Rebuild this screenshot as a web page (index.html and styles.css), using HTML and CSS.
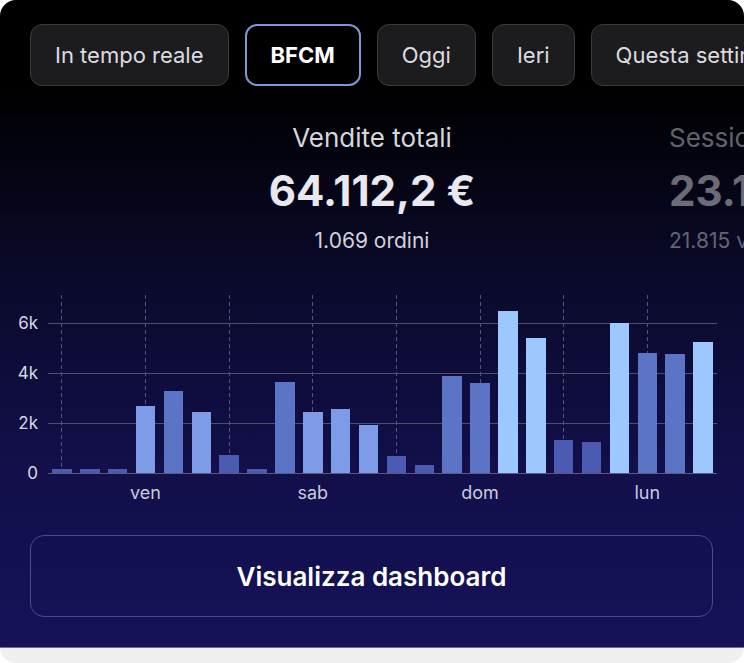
FILE: index.html
```html
<!DOCTYPE html>
<html lang="it">
<head>
    <meta charset="UTF-8">
    <meta name="viewport" content="width=device-width, initial-scale=1.0">
    <title>Statistiche</title>
    <link rel="stylesheet" href="styles.css">
</head>
<body>

    <div class="card">
        <div class="panel">

            <div class="tabs">
                <button class="tab">In tempo reale</button>
                <button class="tab active">BFCM</button>
                <button class="tab">Oggi</button>
                <button class="tab">Ieri</button>
                <button class="tab">Questa settimana</button>
            </div>

            <div class="stats">
                <div class="stat">
                    <div class="stat-title">Vendite totali</div>
                    <div class="stat-value">64.112,2 €</div>
                    <div class="stat-sub">1.069 ordini</div>
                </div>
                <div class="stat dim">
                    <div class="stat-title">Sessioni</div>
                    <div class="stat-value">23.108</div>
                    <div class="stat-sub">21.815 visitatori</div>
                </div>
            </div>

            <div class="chart">
                <div class="y-axis">
                    <span>6k</span>
                    <span>4k</span>
                    <span>2k</span>
                    <span>0</span>
                </div>
                <div class="plot-col">
                    <div class="plot">
                        <div class="slot mark"><div class="bar dark" style="height:4px"></div></div>
                        <div class="slot"><div class="bar dark" style="height:4px"></div></div>
                        <div class="slot"><div class="bar dark" style="height:4px"></div></div>
                        <div class="slot mark"><div class="bar light" style="height:67px"></div></div>
                        <div class="slot"><div class="bar mid" style="height:82px"></div></div>
                        <div class="slot"><div class="bar light" style="height:61px"></div></div>
                        <div class="slot mark"><div class="bar dark" style="height:18px"></div></div>
                        <div class="slot"><div class="bar dark" style="height:4px"></div></div>
                        <div class="slot"><div class="bar mid" style="height:91px"></div></div>
                        <div class="slot mark"><div class="bar light" style="height:61px"></div></div>
                        <div class="slot"><div class="bar light" style="height:64px"></div></div>
                        <div class="slot"><div class="bar light" style="height:48px"></div></div>
                        <div class="slot mark"><div class="bar dark" style="height:17px"></div></div>
                        <div class="slot"><div class="bar dark" style="height:8px"></div></div>
                        <div class="slot"><div class="bar mid" style="height:97px"></div></div>
                        <div class="slot mark"><div class="bar mid" style="height:90px"></div></div>
                        <div class="slot"><div class="bar peak" style="height:162px"></div></div>
                        <div class="slot"><div class="bar peak" style="height:135px"></div></div>
                        <div class="slot mark"><div class="bar dark" style="height:33px"></div></div>
                        <div class="slot"><div class="bar dark" style="height:31px"></div></div>
                        <div class="slot"><div class="bar peak" style="height:150px"></div></div>
                        <div class="slot mark"><div class="bar mid" style="height:120px"></div></div>
                        <div class="slot"><div class="bar mid" style="height:119px"></div></div>
                        <div class="slot"><div class="bar peak" style="height:131px"></div></div>
                    </div>
                    <div class="x-axis">
                        <span>ven</span>
                        <span>sab</span>
                        <span>dom</span>
                        <span>lun</span>
                    </div>
                </div>
            </div>

            <button class="dashboard-btn">Visualizza dashboard</button>
        </div>
    </div>

</body>
</html>
```

FILE: styles.css
```css
/* Pagina */
body {
    margin: 0;
    background: #fff;
    font-family: 'Inter', 'Noto Sans', sans-serif;
}

/* Scheda esterna con angoli arrotondati */
.card {
    height: 663px;
    border-radius: 16px;
    overflow: hidden;
    background: #efefef;
}

/* Pannello scuro con sfumatura verso il blu notte */
.panel {
    height: 648px;
    box-sizing: border-box;
    padding: 24px 31px 0 30px;
    overflow: hidden;
    background: linear-gradient(180deg, #000 14%, #0a0a2a 42%, #120f4a 72%, #15125a 100%);
    border-bottom: 1px solid #6c6aa6;
}

/* Filtri periodo */
.tabs {
    display: flex;
    gap: 16px;
}

.tab {
    flex-shrink: 0;
    height: 62px;
    padding: 0 24px;
    border: 1px solid #3a3a3c;
    border-radius: 12px;
    background: #1c1c1e;
    color: #dcdce0;
    font-family: inherit;
    font-size: 22px;
    white-space: nowrap;
}

.tab.active {
    border: 2px solid #8096d4;
    background: #000;
    color: #fff;
    font-weight: 700;
}

/* Riepilogo vendite */
.stats {
    display: flex;
    gap: 147px;
    margin-top: 36px;
    padding-left: 192px;
}

.stat {
    flex-shrink: 0;
    width: 300px;
    text-align: center;
}

.stat.dim {
    text-align: left;
    opacity: 0.45;
}

.stat-title {
    font-size: 26px;
    line-height: 32px;
    color: #d6d6dc;
}

.stat-value {
    margin-top: 10px;
    font-size: 42px;
    line-height: 54px;
    font-weight: 700;
    color: #e8e8ee;
}

.stat-sub {
    margin-top: 10px;
    font-size: 21px;
    line-height: 26px;
    color: #d2d2da;
}

/* Grafico a barre */
.chart {
    display: flex;
    margin: 41px -4px 0 -30px;
}

.y-axis {
    width: 48px;
    flex-shrink: 0;
    box-sizing: border-box;
    padding: 18px 10px 0 0;
    display: flex;
    flex-direction: column;
    align-items: flex-end;
    gap: 30px;
    font-size: 17px;
    line-height: 20px;
    color: #d8d8e4;
}

.plot-col {
    flex: 1;
}

.plot {
    height: 178px;
    display: flex;
    border-bottom: 1px solid #5a5a7c;
    background-image:
        linear-gradient(#4e4e6e, #4e4e6e),
        linear-gradient(#4e4e6e, #4e4e6e),
        linear-gradient(#4e4e6e, #4e4e6e);
    background-size: 100% 1px;
    background-position: 0 28px, 0 78px, 0 128px;
    background-repeat: no-repeat;
}

.slot {
    flex: 1;
    display: flex;
    align-items: flex-end;
    justify-content: center;
}

/* Linea tratteggiata di inizio giorno */
.slot.mark {
    background: repeating-linear-gradient(to bottom, #54547a 0 4px, transparent 4px 7px) center / 1px 100% no-repeat;
}

.bar {
    width: 19.5px;
}

.bar.dark { background: #4b5bb2; }
.bar.mid { background: #5b74c6; }
.bar.light { background: #7d9be6; }
.bar.peak { background: #9dc8ff; }

.x-axis {
    display: grid;
    grid-template-columns: calc(100% / 48) repeat(4, 25%);
    margin-top: 8px;
    font-size: 18px;
    line-height: 22px;
    color: #cacadc;
    text-align: center;
}

.x-axis span:first-child {
    grid-column: 2;
}

/* Pulsante principale */
.dashboard-btn {
    display: block;
    width: 100%;
    height: 82px;
    margin-top: 31px;
    border: 1px solid #4c4a8a;
    border-radius: 14px;
    background: transparent;
    color: #fff;
    font-family: inherit;
    font-size: 26px;
    font-weight: 600;
}
```
